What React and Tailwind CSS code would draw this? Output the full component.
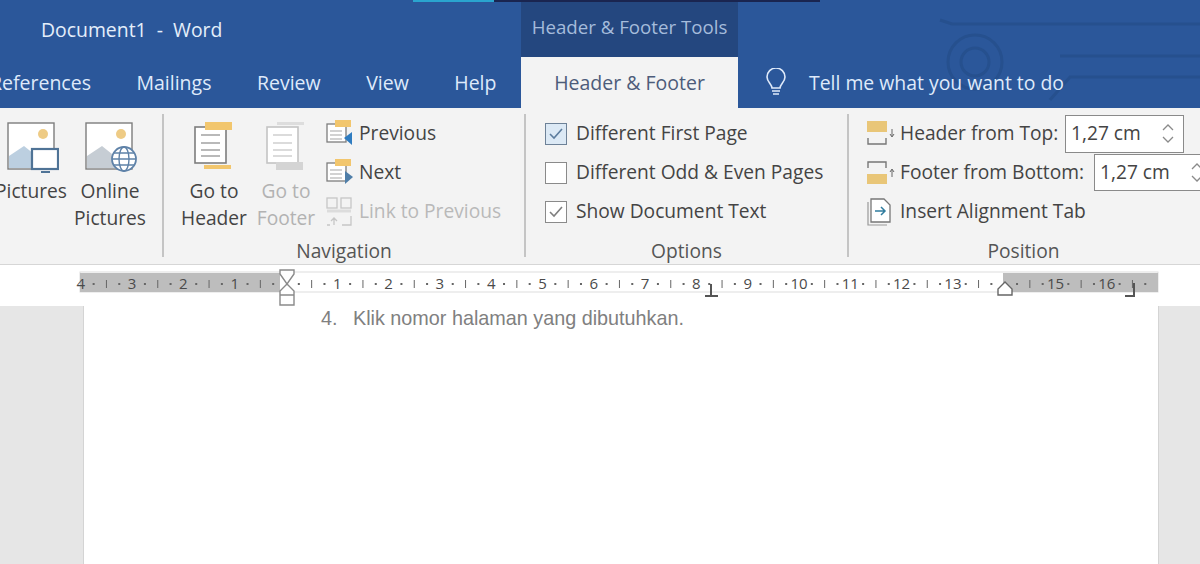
const tabs = ["References", "Mailings", "Review", "View", "Help"]

const Stroke = "#7d7d7d"

const PicturesIcon = () => (
  <svg width="52" height="52" viewBox="0 0 52 52" fill="none">
    <rect x="1" y="1" width="46" height="46" fill="#fff" stroke={Stroke} strokeWidth="1.4" />
    <circle cx="36" cy="12" r="5" fill="#eecb85" />
    <path d="M2 46V34L17 24L32 36V46Z" fill="#bccfe0" />
    <rect x="25" y="27" width="26" height="20" fill="#fff" stroke="#4f7396" strokeWidth="2.2" />
    <path d="M34 50H43" stroke="#4f7396" strokeWidth="2" />
  </svg>
)

const OnlineIcon = () => (
  <svg width="54" height="54" viewBox="0 0 54 54" fill="none">
    <rect x="1" y="1" width="46" height="46" fill="#fff" stroke={Stroke} strokeWidth="1.4" />
    <circle cx="36" cy="12" r="5" fill="#eecb85" />
    <path d="M2 46V34L17 24L32 36V46Z" fill="#c6cdd4" />
    <circle cx="39" cy="37" r="12" fill="#fff" stroke="#5f82a8" strokeWidth="1.8" />
    <ellipse cx="39" cy="37" rx="5" ry="12" stroke="#5f82a8" strokeWidth="1.4" />
    <path d="M27 37H51M29 31H49M29 43H49" stroke="#5f82a8" strokeWidth="1.4" />
  </svg>
)

const HeaderDocIcon = ({ disabled, footer }) => {
  const page = disabled ? "#c4c4c4" : "#7d7d7d"
  const band = disabled ? "#d4d4d4" : "#f2c66d"
  const line = disabled ? "#d0d0d0" : "#a2a2a2"
  return (
    <svg width="44" height="50" viewBox="0 0 44 50" fill="none">
      <rect x="3" y="5" width="31" height="36" fill="#fff" stroke={page} strokeWidth="1.6" />
      <path d="M9 13H28M9 21H28M9 28H28M9 34H28" stroke={line} strokeWidth="1.4" />
      <rect x="13" y="0" width="27" height={footer ? 3 : 8} fill={footer ? "#dddddd" : band} />
      <rect x="12" y={footer ? 40 : 43} width="27" height={footer ? 8 : 4} fill={band} />
    </svg>
  )
}

const PrevNextIcon = ({ next }) => (
  <svg width="28" height="28" viewBox="0 0 28 28" fill="none">
    <rect x="1" y="4" width="19" height="18" fill="#fff" stroke="#7d7d7d" strokeWidth="1.3" />
    <rect x="9" y="0" width="16" height="7" fill="#f2c66d" />
    <path d="M4 11H16M4 15H16M4 19H16" stroke="#a5a5a5" strokeWidth="1.1" />
    {next ? <path d="M19 12L27 18L19 25Z" fill="#4f7ea8" /> : <path d="M26 12L18 18L26 25Z" fill="#2f7cc0" />}
  </svg>
)

const LinkIcon = () => (
  <svg width="28" height="30" viewBox="0 0 28 30" fill="none" stroke="#c6c6c6" strokeWidth="1.3">
    <rect x="1" y="1" width="10" height="10" />
    <rect x="15" y="1" width="10" height="10" />
    <path d="M1 14H25" strokeWidth="3" stroke="#dcdcdc" />
    <path d="M16 28H25V19M1 28H4M8 21V28M5 24L8 21L11 24" />
  </svg>
)

const HeaderTopIcon = () => (
  <svg width="30" height="26" viewBox="0 0 30 26" fill="none">
    <rect x="0" y="0" width="20" height="11" fill="#e9c678" />
    <path d="M1 17V23H19V17" stroke="#777" strokeWidth="1.4" />
    <path d="M25 8V15M23 13L25 16L27 13" stroke="#666" strokeWidth="1" />
  </svg>
)

const FooterBottomIcon = () => (
  <svg width="30" height="26" viewBox="0 0 30 26" fill="none">
    <path d="M1 8V2H19V8" stroke="#777" strokeWidth="1.4" />
    <rect x="0" y="14" width="20" height="10" fill="#e9c678" />
    <path d="M25 10V17M23 12L25 9L27 12" stroke="#666" strokeWidth="1" />
  </svg>
)

const AlignTabIcon = () => (
  <svg width="26" height="28" viewBox="0 0 26 28" fill="none">
    <path d="M1 4V27H20" stroke="#999" strokeWidth="1.2" />
    <path d="M4 1H17L23 7V24H4Z" fill="#fff" stroke="#777" strokeWidth="1.3" />
    <path d="M8 13H17M14 9L18 13L14 17" stroke="#2f7c9e" strokeWidth="1.5" />
  </svg>
)

const Check = ({ checked, tinted }) => (
  <div
    className={`w-[22px] h-[22px] shrink-0 border flex items-center justify-center ${
      tinted ? "border-[#6d8197] bg-[#dce9f5]" : "border-[#8a8a8a] bg-white"
    }`}
  >
    {checked && (
      <svg width="16" height="14" viewBox="0 0 16 14" fill="none">
        <path d="M2 7L6 11L14 2" stroke={tinted ? "#5d7d9e" : "#7f7f7f"} strokeWidth="1.6" />
      </svg>
    )}
  </div>
)

const Spin = () => (
  <div className="flex flex-col items-center gap-[5px] ml-auto mr-[9px]">
    <svg width="12" height="7" viewBox="0 0 12 7" fill="none">
      <path d="M1 6L6 1L11 6" stroke="#8a8a8a" strokeWidth="1.3" />
    </svg>
    <svg width="12" height="7" viewBox="0 0 12 7" fill="none">
      <path d="M1 1L6 6L11 1" stroke="#8a8a8a" strokeWidth="1.3" />
    </svg>
  </div>
)

const BigButton = ({ icon, lines, width, disabled }) => (
  <div className={`flex flex-col items-center shrink-0 ${width} ${disabled ? "text-[#b2b2b2]" : "text-[#444]"}`}>
    <div className="h-[63px] pt-[8px] flex justify-center">{icon}</div>
    {lines.map((l) => (
      <div key={l} className="h-[27px] leading-[27px] whitespace-nowrap">
        {l}
      </div>
    ))}
  </div>
)

const SmallRow = ({ icon, children, disabled }) => (
  <div className={`h-[39px] flex items-center whitespace-nowrap ${disabled ? "text-[#b9b9b9]" : "text-[#444]"}`}>
    <div className="w-[33px] shrink-0">{icon}</div>
    <span>{children}</span>
  </div>
)

const Group = ({ label, width, children, className = "" }) => (
  <div className={`shrink-0 h-[156px] flex flex-col ${width}`}>
    <div className={`h-[133px] pt-[6px] flex ${className}`}>{children}</div>
    <div className="h-[20px] leading-[20px] text-center text-[#555] whitespace-nowrap">{label}</div>
  </div>
)

const Sep = () => <div className="w-[2px] h-[143px] mt-[6px] shrink-0 bg-[#c4c4c4]" />

const originX = 286
const unit = 51.3
const rulerMarks = []
for (let n = -4; n <= 16; n++) {
  // 14 sits under the right indent marker in the picture
  if (n !== 0 && n !== 14) rulerMarks.push({ n, x: originX + n * unit })
}
const ticks = []
for (let n = -4; n < 17; n++) {
  ticks.push(originX + (n + 0.5) * unit)
}
const dots = []
for (let n = -4; n < 17; n++) {
  dots.push(originX + (n + 0.25) * unit, originX + (n + 0.75) * unit)
}

const Ruler = () => (
  <svg width="1200" height="41" viewBox="0 0 1200 41" className="block" fill="none" fontFamily="'Open Sans', sans-serif">
    <rect x="80" y="7" width="1078" height="20" fill="#ffffff" stroke="#dddddd" strokeWidth="1" />
    <rect x="80" y="8" width="200" height="19" fill="#bdbdbd" />
    <rect x="1003" y="8" width="155" height="19" fill="#bdbdbd" />
    {ticks.filter((x) => x < 1150).map((x) => (
      <path key={x} d={`M${x} 15V23`} stroke="#666" strokeWidth="1" />
    ))}
    {dots.filter((x) => x > 88 && x < 1150).map((x) => (
      <rect key={x} x={x - 1} y="18" width="2" height="2" fill="#666" />
    ))}
    {rulerMarks.map((m) => (
      <text key={m.n} x={m.x} y="24" textAnchor="middle" fontSize="15" fill="#4a4a4a">
        {Math.abs(m.n)}
      </text>
    ))}
    <path d="M280 5H294V9L287 19L280 9ZM280 30V26L287 19L294 26V30ZM280 30H294V40H280Z" fill="#fff" stroke="#8a8a8a" strokeWidth="1.4" />
    <path d="M711 19V30M705 31H718" stroke="#555" strokeWidth="2" />
    <path d="M1005 17L1012 24V30H998V24Z" fill="#fff" stroke="#666" strokeWidth="1.4" />
    <path d="M1134 18V31H1125" stroke="#555" strokeWidth="2" />
  </svg>
)

export default function App() {
  return (
    <div className="w-[1200px] h-[564px] overflow-hidden flex flex-col bg-white font-['Open_Sans',sans-serif] text-[19.2px]">
      <div className="relative h-[108px] shrink-0 bg-[#2b579a] overflow-hidden text-[19.4px]">
        <svg className="absolute inset-0" width="1200" height="108" viewBox="0 0 1200 108" fill="none" stroke="#26508e" strokeWidth="3">
          <path d="M940 20L952 24H1200M1060 56H1200M1110 77H1200M1050 100L1070 77H1110" />
          <circle cx="975" cy="62" r="27" />
          <circle cx="975" cy="62" r="14" />
        </svg>

        <div className="relative flex h-[2px]">
          <div className="w-[413px]" />
          <div className="w-[81px] bg-[#2aa5cf]" />
          <div className="w-[326px] bg-[#1a2550]" />
        </div>

        <div className="relative flex h-[55px]">
          <div className="w-[521px] pl-[41px] pt-[14px] leading-[28px] text-[#e4eefa] whitespace-pre">Document1  -  Word</div>
          <div className="w-[217px] bg-[#24477f] text-center pt-[11px] leading-[28px] text-[18.7px] text-[#a5bcdb]">
            Header &amp; Footer Tools
          </div>
        </div>

        <div className="relative flex h-[51px] items-stretch">
          <div className="w-[521px] shrink-0 overflow-hidden flex items-center pt-[1px] text-[19.5px] text-[#dfeafa]">
            <div className="flex gap-[45.5px] -ml-[10px] whitespace-nowrap">
              {tabs.map((t) => (
                <span key={t}>{t}</span>
              ))}
            </div>
          </div>
          <div className="w-[217px] shrink-0 bg-[#f3f3f3] text-[19.5px] text-[#4d5c7a] flex items-center justify-center pt-[1px]">
            Header &amp; Footer
          </div>
          <div className="flex items-center pl-[26px] gap-[21px] pt-[1px] text-[#dfeafa]">
            <svg width="24" height="30" viewBox="0 0 24 30" fill="none" stroke="#dfeafa" strokeWidth="1.6">
              <path d="M8 20C8 16 3 14 3 9A9 9 0 0 1 21 9C21 14 16 16 16 20Z" />
              <path d="M8 23H16M9 26H15" />
            </svg>
            <span>Tell me what you want to do</span>
          </div>
        </div>
      </div>

      <div className="h-[157px] shrink-0 flex bg-[#f3f3f3] border-b border-[#d6d6d6] overflow-hidden">
        <Group label="" width="w-[162px]">
          <div className="-ml-[4px] shrink-0 flex">
            <BigButton width="w-[70px]" lines={["Pictures"]} icon={<div className="pl-[4px]"><PicturesIcon /></div>} />
            <BigButton width="w-[72px] ml-[8px]" lines={["Online", "Pictures"]} icon={<div className="pl-[4px]"><OnlineIcon /></div>} />
          </div>
        </Group>
        <Sep />
        <Group label="Navigation" width="w-[360px]">
          <BigButton width="w-[68px] ml-[16px]" lines={["Go to", "Header"]} icon={<HeaderDocIcon />} />
          <BigButton width="w-[60px] ml-[8px]" disabled lines={["Go to", "Footer"]} icon={<HeaderDocIcon disabled footer />} />
          <div className="ml-[10px] flex flex-col">
            <SmallRow icon={<PrevNextIcon />}>Previous</SmallRow>
            <SmallRow icon={<PrevNextIcon next />}>Next</SmallRow>
            <SmallRow disabled icon={<LinkIcon />}>Link to Previous</SmallRow>
          </div>
        </Group>
        <Sep />
        <Group label="Options" width="w-[321px]">
          <div className="pl-[19px] flex flex-col text-[#444]">
            <div className="h-[39px] flex items-center gap-[9px]"><Check checked tinted /><span>Different First Page</span></div>
            <div className="h-[39px] flex items-center gap-[9px]"><Check /><span>Different Odd &amp; Even Pages</span></div>
            <div className="h-[39px] flex items-center gap-[9px]"><Check checked /><span>Show Document Text</span></div>
          </div>
        </Group>
        <Sep />
        <Group label="Position" width="w-[349px]">
          <div className="pl-[18px] flex flex-col text-[#444] whitespace-nowrap">
            <div className="h-[39px] flex items-center">
              <div className="w-[33px] shrink-0"><HeaderTopIcon /></div>
              <span className="w-[165px] shrink-0">Header from Top:</span>
              <div className="w-[119px] h-[38px] shrink-0 border border-[#8a8a8a] bg-white flex items-center pl-[5px]">
                <span>1,27 cm</span>
                <Spin />
              </div>
            </div>
            <div className="h-[39px] flex items-center">
              <div className="w-[33px] shrink-0"><FooterBottomIcon /></div>
              <span className="w-[194px] shrink-0">Footer from Bottom:</span>
              <div className="w-[119px] h-[37px] shrink-0 border border-[#8a8a8a] bg-white flex items-center pl-[5px]">
                <span>1,27 cm</span>
                <Spin />
              </div>
            </div>
            <div className="h-[39px] flex items-center">
              <div className="w-[33px] shrink-0"><AlignTabIcon /></div>
              <span>Insert Alignment Tab</span>
            </div>
          </div>
        </Group>
      </div>

      <Ruler />

      <div className="flex-1 flex">
        <div className="w-[84px] bg-[#e6e6e6] border-r border-[#d4d4d4]" />
        <div className="flex-1 bg-white pl-[237px] flex text-[19.8px] leading-[24px] text-[#808080] font-['Liberation_Sans',sans-serif]">
          <span className="w-[32px]">4.</span>
          <span>Klik nomor halaman yang dibutuhkan.</span>
        </div>
        <div className="w-[42px] bg-[#e6e6e6] border-l border-[#d4d4d4]" />
      </div>
    </div>
  )
}
